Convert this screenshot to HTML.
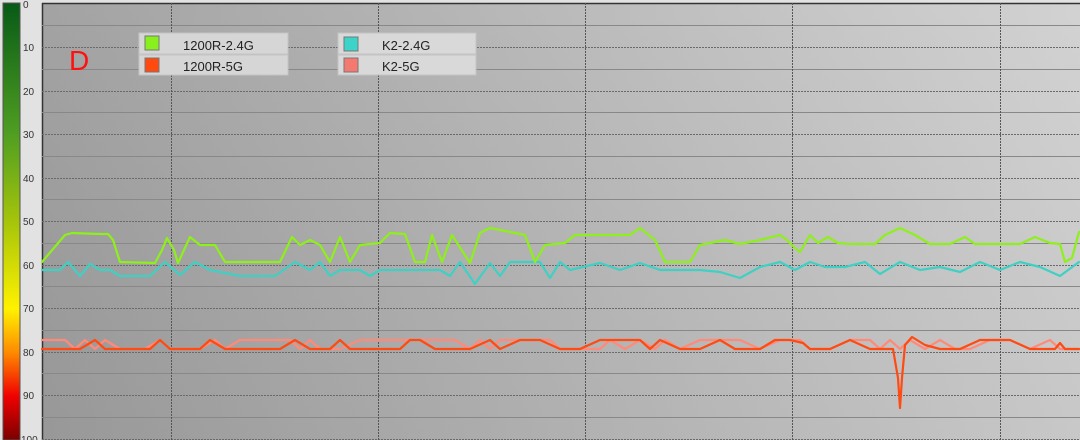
<!DOCTYPE html>
<html><head><style>
body{margin:0;width:1080px;height:440px;overflow:hidden;background:#e2e2e2;font-family:"Liberation Sans",sans-serif}
</style></head><body>
<svg width="1080" height="440" xmlns="http://www.w3.org/2000/svg" style="position:absolute;left:0;top:0">
<defs>
<linearGradient id="bar" x1="0" y1="0" x2="0" y2="1">
<stop offset="0" stop-color="#075a16"/>
<stop offset="0.3" stop-color="#4f9e22"/>
<stop offset="0.5" stop-color="#a6c40a"/>
<stop offset="0.7" stop-color="#fff200"/>
<stop offset="0.8" stop-color="#ff8a00"/>
<stop offset="0.9" stop-color="#f00000"/>
<stop offset="1" stop-color="#7a0000"/>
</linearGradient>
<linearGradient id="bg" x1="0" y1="0" x2="1" y2="0">
<stop offset="0" stop-color="#9e9e9e"/>
<stop offset="1" stop-color="#d0d0d0"/>
</linearGradient>
<linearGradient id="bgv" x1="0" y1="0" x2="0" y2="1">
<stop offset="0" stop-color="#ffffff" stop-opacity="0.05"/>
<stop offset="1" stop-color="#000000" stop-opacity="0.04"/>
</linearGradient>
</defs>
<rect x="3" y="3" width="17" height="437" fill="url(#bar)" stroke="#555" stroke-width="1"/>
<g font-size="10" fill="#333">
<text x="23" y="8">0</text><text x="23" y="51">10</text><text x="23" y="95">20</text>
<text x="23" y="138">30</text><text x="23" y="182">40</text><text x="23" y="225">50</text>
<text x="23" y="269">60</text><text x="23" y="312">70</text><text x="23" y="356">80</text>
<text x="23" y="399">90</text><text x="21" y="443">100</text>
</g>
<rect x="42" y="3" width="1038" height="437" fill="url(#bg)"/>
<rect x="42" y="3" width="1038" height="437" fill="url(#bgv)"/>
<line x1="42.5" y1="3" x2="42.5" y2="440" stroke="#333" stroke-width="1.5"/>
<line x1="42" y1="3.5" x2="1080" y2="3.5" stroke="#333" stroke-width="1.5"/>
<g stroke="#6a6a6a" stroke-width="1">
<line x1="42" y1="25.5" x2="1080" y2="25.5" stroke="#888"/>
<line x1="42" y1="47.5" x2="1080" y2="47.5" stroke-dasharray="2,1"/>
<line x1="42" y1="69.5" x2="1080" y2="69.5" stroke="#888"/>
<line x1="42" y1="91.5" x2="1080" y2="91.5" stroke-dasharray="2,1"/>
<line x1="42" y1="112.5" x2="1080" y2="112.5" stroke="#888"/>
<line x1="42" y1="134.5" x2="1080" y2="134.5" stroke-dasharray="2,1"/>
<line x1="42" y1="156.5" x2="1080" y2="156.5" stroke="#888"/>
<line x1="42" y1="178.5" x2="1080" y2="178.5" stroke-dasharray="2,1"/>
<line x1="42" y1="199.5" x2="1080" y2="199.5" stroke="#888"/>
<line x1="42" y1="221.5" x2="1080" y2="221.5" stroke-dasharray="2,1"/>
<line x1="42" y1="243.5" x2="1080" y2="243.5" stroke="#888"/>
<line x1="42" y1="265.5" x2="1080" y2="265.5" stroke-dasharray="2,1"/>
<line x1="42" y1="286.5" x2="1080" y2="286.5" stroke="#888"/>
<line x1="42" y1="308.5" x2="1080" y2="308.5" stroke-dasharray="2,1"/>
<line x1="42" y1="330.5" x2="1080" y2="330.5" stroke="#888"/>
<line x1="42" y1="352.5" x2="1080" y2="352.5" stroke-dasharray="2,1"/>
<line x1="42" y1="373.5" x2="1080" y2="373.5" stroke="#888"/>
<line x1="42" y1="395.5" x2="1080" y2="395.5" stroke-dasharray="2,1"/>
<line x1="42" y1="417.5" x2="1080" y2="417.5" stroke="#888"/>
<line x1="42" y1="439.5" x2="1080" y2="439.5" stroke-dasharray="2,1"/>
<g stroke-dasharray="2,1" stroke="#555">
<line x1="171.5" y1="3" x2="171.5" y2="440"/>
<line x1="378.5" y1="3" x2="378.5" y2="440"/>
<line x1="585.5" y1="3" x2="585.5" y2="440"/>
<line x1="792.5" y1="3" x2="792.5" y2="440"/>
<line x1="1000.5" y1="3" x2="1000.5" y2="440"/>
</g>
</g>
<text x="69" y="70" font-size="28" fill="#ff1010">D</text>
<g font-size="13" fill="#222">
<rect x="139" y="33" width="149" height="21" fill="#d6d6d6" stroke="#c4c4c4"/>
<rect x="139" y="55" width="149" height="20" fill="#d6d6d6" stroke="#c4c4c4"/>
<rect x="145" y="36" width="14" height="14" fill="#88f01c" stroke="#777"/>
<rect x="145" y="58" width="14" height="14" fill="#ff4a10" stroke="#777"/>
<text x="183" y="50">1200R-2.4G</text><text x="183" y="71">1200R-5G</text>
<rect x="338" y="33" width="138" height="21" fill="#d9d9d9" stroke="#c4c4c4"/>
<rect x="338" y="55" width="138" height="20" fill="#d9d9d9" stroke="#c4c4c4"/>
<rect x="344" y="37" width="14" height="14" fill="#3cd4c8" stroke="#777"/>
<rect x="344" y="58" width="14" height="14" fill="#f47a70" stroke="#777"/>
<text x="382" y="50">K2-2.4G</text><text x="382" y="71">K2-5G</text>
</g>
<g fill="none" stroke-width="2.2" stroke-linejoin="round" stroke-linecap="round">
<polyline stroke="#3fd0c4" points="42,270 60,270 68,262 80,276 90,264 100,270 110,270 120,276 150,276 165,262 180,275 195,262 210,270 240,276 275,276 295,262 310,270 320,262 330,276 340,270 360,270 370,276 380,270 400,270 420,270 440,270 450,276 460,262 475,284 490,263 500,276 510,262 540,262 550,278 560,262 570,270 600,263 620,270 640,263 660,270 680,270 700,270 720,272 740,278 760,267 780,262 795,270 810,262 825,267 845,267 865,262 880,274 900,262 920,270 940,267 960,272 980,262 1000,270 1020,262 1040,267 1060,276 1079,262"/>
<polyline stroke="#8ef01a" points="42,262 65,235 72,233 100,234 108,234 113,240 120,262 155,263 162,250 167,238 174,250 178,263 190,237 200,245 215,245 225,262 250,262 270,262 280,262 292,237 300,245 310,240 320,245 330,262 340,237 350,262 360,245 380,243 390,233 405,234 415,262 425,262 432,235 442,262 452,235 470,263 480,233 490,228 510,232 525,235 535,262 545,245 565,243 575,235 600,235 630,235 640,228 655,240 665,262 690,262 700,245 710,243 725,240 740,244 760,240 780,235 787,240 795,248 800,252 810,235 818,243 828,237 838,243 850,244 860,244 875,244 885,235 900,228 915,235 930,244 950,244 965,237 975,244 1000,244 1020,244 1035,237 1050,243 1060,244 1065,262 1072,258 1079,232"/>
<polyline stroke="#ff8a7a" points="42,340 65,340 75,349 85,340 95,349 105,340 120,349 135,349 145,349 160,340 170,349 185,349 200,349 215,340 225,349 240,340 255,340 290,340 300,349 310,340 320,349 340,349 360,340 380,340 400,340 440,340 455,340 470,349 480,340 490,349 500,340 520,340 540,340 550,340 560,349 580,349 600,349 610,340 625,349 640,340 655,349 665,340 680,349 700,340 720,340 740,340 760,349 780,340 800,340 810,349 830,349 850,340 870,340 880,349 890,340 900,349 910,340 925,349 940,340 955,349 970,349 990,340 1010,340 1030,349 1050,340 1060,349 1079,349"/>
<polyline stroke="#ff4a12" points="42,349 80,349 95,340 105,349 130,349 150,349 160,340 170,349 200,349 210,340 225,349 260,349 280,349 295,340 310,349 330,349 340,340 350,349 380,349 400,349 410,340 420,340 435,349 470,349 490,340 500,349 520,340 540,340 560,349 580,349 600,340 640,340 650,349 660,340 680,349 700,349 720,340 735,349 760,349 775,340 790,340 803,343 810,349 830,349 850,340 870,349 880,349 893,349 898,378 900,408 902,378 905,345 912,337 925,345 940,349 960,349 980,340 1010,340 1030,349 1055,349 1060,343 1065,349 1079,349"/>
</g>
</svg>
</body></html>
